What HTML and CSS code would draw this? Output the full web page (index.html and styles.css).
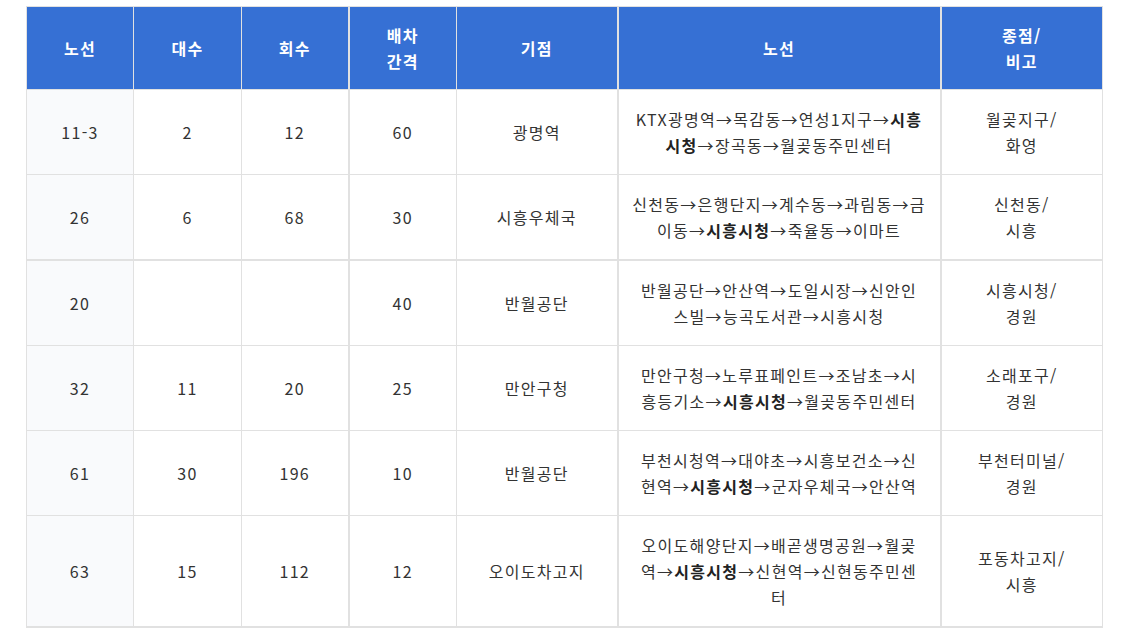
FILE: index.html
```html
<!DOCTYPE html>
<html lang="ko">
<head>
<meta charset="utf-8">
<link rel="stylesheet" href="styles.css">
</head>
<body>
<div class="wrap">
<table class="bus">
  <colgroup>
    <col class="c1"><col class="c2"><col class="c3"><col class="c4"><col class="c5"><col class="c6"><col class="c7">
  </colgroup>
  <thead>
    <tr>
      <th>노선</th>
      <th>대수</th>
      <th>회수</th>
      <th class="thick">배차<br>간격</th>
      <th>기점</th>
      <th class="thick">노선</th>
      <th class="thick">종점/<br>비고</th>
    </tr>
  </thead>
  <tbody>
    <tr>
      <td class="no">11-3</td>
      <td>2</td>
      <td>12</td>
      <td class="thick">60</td>
      <td>광명역</td>
      <td class="route thick">KTX광명역→목감동→연성1지구→<b>시흥<br>시청</b>→장곡동→월곶동주민센터</td>
      <td class="thick">월곶지구/<br>화영</td>
    </tr>
    <tr>
      <td class="no">26</td>
      <td>6</td>
      <td>68</td>
      <td class="thick">30</td>
      <td>시흥우체국</td>
      <td class="route thick">신천동→은행단지→계수동→과림동→금<br>이동→<b>시흥시청</b>→죽율동→이마트</td>
      <td class="thick">신천동/<br>시흥</td>
    </tr>
    <tr class="sep">
      <td class="no">20</td>
      <td></td>
      <td></td>
      <td class="thick">40</td>
      <td>반월공단</td>
      <td class="route thick">반월공단→안산역→도일시장→신안인<br>스빌→능곡도서관→시흥시청</td>
      <td class="thick">시흥시청/<br>경원</td>
    </tr>
    <tr>
      <td class="no">32</td>
      <td>11</td>
      <td>20</td>
      <td class="thick">25</td>
      <td>만안구청</td>
      <td class="route thick">만안구청→노루표페인트→조남초→시<br>흥등기소→<b>시흥시청</b>→월곶동주민센터</td>
      <td class="thick">소래포구/<br>경원</td>
    </tr>
    <tr>
      <td class="no">61</td>
      <td>30</td>
      <td>196</td>
      <td class="thick">10</td>
      <td>반월공단</td>
      <td class="route thick">부천시청역→대야초→시흥보건소→신<br>현역→<b>시흥시청</b>→군자우체국→안산역</td>
      <td class="thick">부천터미널/<br>경원</td>
    </tr>
    <tr>
      <td class="no">63</td>
      <td>15</td>
      <td>112</td>
      <td class="thick">12</td>
      <td>오이도차고지</td>
      <td class="route thick">오이도해양단지→배곧생명공원→월곶<br>역→<b>시흥시청</b>→신현역→신현동주민센<br>터</td>
      <td class="thick">포동차고지/<br>시흥</td>
    </tr>
  </tbody>
</table>
</div>
</body>
</html>
```

FILE: styles.css
```css
html, body {
  margin: 0;
  padding: 0;
  background: #ffffff;
}

.wrap {
  padding: 6px 0 0 26px;
}

.bus {
  border-collapse: collapse;
  table-layout: fixed;
  width: 1077px;
  font-family: "Noto Sans CJK KR", "Noto Sans", sans-serif;
  font-size: 16px;
  line-height: 26px;
  letter-spacing: 1.3px;
  color: #333333;
  border-bottom: 2px solid #e1e1e1;
}

.c1 { width: 107px; }
.c2 { width: 108px; }
.c3 { width: 107px; }
.c4 { width: 108px; }
.c5 { width: 161px; }
.c6 { width: 323px; }
.c7 { width: 162px; }

.bus th,
.bus td {
  border: 1px solid #e1e1e1;
  text-align: center;
  vertical-align: middle;
  padding: 16px 8px;
}

.bus th {
  background: #3670d4;
  color: #ffffff;
  font-weight: 700;
  height: 50px;
  padding: 15px 8px;
}

.bus td {
  height: 52px;
}

.bus .thick {
  border-left-width: 2px;
}

.bus td.no {
  background: #f9fafc;
}

.bus td.route {
  padding: 16px 4px;
  white-space: nowrap;
}

.bus td b {
  font-weight: 700;
  color: #222222;
}

.bus tr.sep td {
  border-top-width: 2px;
}
```
